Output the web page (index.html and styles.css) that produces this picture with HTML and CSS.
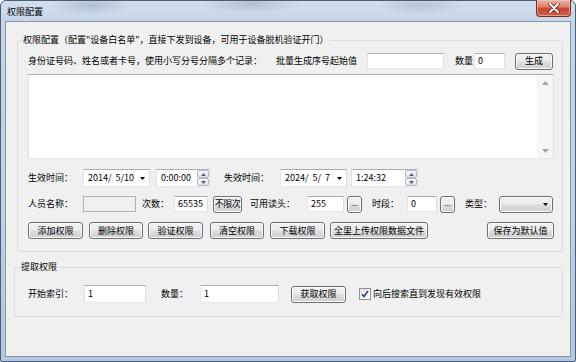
FILE: index.html
```html
<!DOCTYPE html>
<html>
<head>
<meta charset="utf-8">
<link rel="stylesheet" href="styles.css">
</head>
<body>
<div class="window">
  <div class="titlebar">
    <span class="title">权限配置</span>
    <div class="close">
      <svg width="12" height="10" viewBox="0 0 12 10"><path d="M2 1 L10 9 M10 1 L2 9" stroke="#5a1d14" stroke-width="3.4" stroke-linecap="round"/><path d="M2 1 L10 9 M10 1 L2 9" stroke="#fff" stroke-width="2" stroke-linecap="round"/></svg>
    </div>
  </div>
  <div class="client">
    <div class="group g1">
      <span class="legend">权限配置（配置"设备白名单"，直接下发到设备，可用于设备脱机验证开门）</span>
      <div class="row r1">
        <span class="lbl w248">身份证号码、姓名或者卡号，使用小写分号分隔多个记录：</span>
        <span class="lbl w91">批量生成序号起始值</span>
        <div class="tb w77"></div>
        <span class="lbl w19 ml11">数量</span>
        <div class="tb w31">0</div>
        <div class="btn w38 ml10">生成</div>
      </div>
      <div class="memo">
        <div class="vscroll">
          <svg width="7" height="4" viewBox="0 0 7 4"><path d="M0 4 L3.5 0 L7 4 Z" fill="#a6a6a6"/></svg>
          <svg width="7" height="4" viewBox="0 0 7 4"><path d="M0 0 L3.5 4 L7 0 Z" fill="#a6a6a6"/></svg>
        </div>
      </div>
      <div class="row r3">
        <span class="lbl w55">生效时间：</span>
        <div class="dtp w67"><span class="val">2014/&nbsp; 5/10</span><svg class="dd" width="5" height="3" viewBox="0 0 5 3"><path d="M0 0 L5 0 L2.5 3 Z" fill="#000"/></svg></div>
        <div class="dtp time w54 ml6"><span class="val">0:00:00</span>
          <div class="spin"><div class="sb"><svg width="5" height="3" viewBox="0 0 5 3"><path d="M0 3 L2.5 0 L5 3 Z" fill="#4a6484"/></svg></div><div class="sb"><svg width="5" height="3" viewBox="0 0 5 3"><path d="M0 0 L2.5 3 L5 0 Z" fill="#4a6484"/></svg></div></div>
        </div>
        <span class="lbl w56 ml14">失效时间：</span>
        <div class="dtp w67"><span class="val">2024/&nbsp; 5/&nbsp; 7</span><svg class="dd" width="5" height="3" viewBox="0 0 5 3"><path d="M0 0 L5 0 L2.5 3 Z" fill="#000"/></svg></div>
        <div class="dtp time w67 ml4"><span class="val">1:24:32</span>
          <div class="spin"><div class="sb"><svg width="5" height="3" viewBox="0 0 5 3"><path d="M0 3 L2.5 0 L5 3 Z" fill="#4a6484"/></svg></div><div class="sb"><svg width="5" height="3" viewBox="0 0 5 3"><path d="M0 0 L2.5 3 L5 0 Z" fill="#4a6484"/></svg></div></div>
        </div>
      </div>
      <div class="row r4">
        <span class="lbl w55">人员名称：</span>
        <div class="tb dis w53"></div>
        <span class="lbl w32 ml6">次数：</span>
        <div class="tb w34">65535</div>
        <div class="btn w29 ml5 tight">不限次</div>
        <span class="lbl w57 ml8">可用读头：</span>
        <div class="tb w37">255</div>
        <div class="btn dots w15 ml3">...</div>
        <span class="lbl w35 ml10">时段：</span>
        <div class="tb w30">0</div>
        <div class="btn dots w15 ml3">...</div>
        <span class="lbl w34 ml10">类型：</span>
        <div class="combo w54"><svg width="5" height="3" viewBox="0 0 5 3"><path d="M0 0 L5 0 L2.5 3 Z" fill="#000"/></svg></div>
      </div>
      <div class="row r5">
        <div class="btn w55">添加权限</div>
        <div class="btn w54 ml6">删除权限</div>
        <div class="btn w55 ml5">验证权限</div>
        <div class="btn w54 ml7">清空权限</div>
        <div class="btn w55 ml6">下载权限</div>
        <div class="btn w98 ml5">全里上传权限数据文件</div>
        <div class="btn w67 mlauto">保存为默认值</div>
      </div>
    </div>
    <div class="group g2">
      <span class="legend">提取权限</span>
      <div class="row r6">
        <span class="lbl w56">开始索引：</span>
        <div class="tb tall w62">1</div>
        <span class="lbl w39 ml15">数量：</span>
        <div class="tb tall w79">1</div>
        <div class="btn w55 ml12">获取权限</div>
        <div class="chk ml13"><svg width="8" height="8" viewBox="0 0 8 8"><path d="M1 4.2 L3 6.5 L7 1" stroke="#21418a" stroke-width="1.5" fill="none"/></svg></div>
        <span class="lbl ml2">向后搜索直到发现有效权限</span>
      </div>
    </div>
  </div>
</div>
</body>
</html>
```
FILE: styles.css
```css
* { box-sizing: border-box; }
html, body { margin: 0; padding: 0; }
body {
  width: 576px;
  height: 362px;
  overflow: hidden;
  background: #ffffff;
  font-family: "Noto Sans CJK SC", "Noto Sans", sans-serif;
  font-size: 9px;
  line-height: 12px;
  color: #000;
}
.window {
  width: 576px;
  height: 362px;
  border: 1px solid #4a5d76;
  border-radius: 6px 6px 2px 2px;
  padding: 0 4px 4px 4px;
  display: flex;
  flex-direction: column;
  background:
    radial-gradient(ellipse 40px 10px at 90px 4px, rgba(120,140,165,0.35), transparent),
    radial-gradient(ellipse 50px 9px at 250px 3px, rgba(110,130,155,0.3), transparent),
    radial-gradient(ellipse 45px 9px at 420px 4px, rgba(120,140,165,0.3), transparent),
    linear-gradient(to bottom, #d3deea 0px, #c6d6e8 20px, #bcd0e6 60%, #b3c9e1 100%);
}
.titlebar {
  height: 20px;
  display: flex;
  align-items: flex-start;
}
.title {
  margin-top: 5px;
  padding-left: 2px;
  color: #000;
}
.close {
  margin-left: auto;
  margin-top: -1px;
  width: 35px;
  height: 17px;
  border: 1px solid #7a2b20;
  border-top: none;
  border-radius: 0 0 4px 4px;
  background: linear-gradient(to bottom, #eab2a5 0%, #dc8572 40%, #c8452f 55%, #d06248 100%);
  box-shadow: inset 0 0 0 1px rgba(255,210,200,0.5);
  display: flex;
  align-items: center;
  justify-content: center;
}
.client {
  flex: 1;
  background: #f0f0f0;
  border: 1px solid #8396ae;
  display: flex;
  flex-direction: column;
}
.group {
  position: relative;
  border: 1px solid #d5dfe5;
  border-radius: 3px;
  display: flex;
  flex-direction: column;
}
.legend {
  position: absolute;
  top: -7px;
  left: 4px;
  padding: 0 1px;
  background: #f0f0f0;
  line-height: 12px;
  white-space: nowrap;
}
.g1 {
  margin: 18px 7px 0 11px;
  padding: 12px 8px 12px 10px;
}
.g2 {
  margin: 15px 7px 0 8px;
  padding: 17px 8px 13px 13px;
}
.g2 .legend { left: 5px; }
.row {
  display: flex;
  align-items: center;
  flex-shrink: 0;
}
.r1 { height: 16px; }
.r3 { height: 18px; margin-top: 10px; }
.r4 { height: 18px; margin-top: 8px; }
.r5 { height: 17px; margin-top: 9px; }
.r6 { height: 18px; }
.lbl { white-space: nowrap; flex-shrink: 0; }
.tb {
  flex-shrink: 0;
  height: 16px;
  background: #fff;
  border: 1px solid;
  border-color: #abadb3 #dbdfe6 #e3e9ef #e2e3ea;
  padding-left: 3px;
  line-height: 14px;
  white-space: nowrap;
  overflow: hidden;
}
.tb.tall { height: 18px; line-height: 16px; }
.tb.dis { background: #f0f0f0; border-color: #adb2b5; }
.memo {
  margin-top: 5px;
  height: 85px;
  background: #fff;
  border: 1px solid;
  border-color: #abadb3 #dbdfe6 #e3e9ef #e2e3ea;
  display: flex;
  justify-content: flex-end;
}
.vscroll {
  width: 16px;
  background: #f6f6f6;
  display: flex;
  flex-direction: column;
  justify-content: space-between;
  align-items: center;
  padding: 6px 0 5px;
}
.dtp {
  flex-shrink: 0;
  height: 18px;
  background: #fff;
  border: 1px solid;
  border-color: #abadb3 #dbdfe6 #e3e9ef #e2e3ea;
  display: flex;
  align-items: center;
  padding-left: 4px;
}
.dtp .val { white-space: pre; }
.dtp .dd { margin-left: auto; margin-right: 4px; }
.spin {
  margin-left: auto;
  width: 12px;
  height: 16px;
  display: flex;
  flex-direction: column;
}
.sb {
  flex: 1;
  border: 1px solid #b5bac2;
  border-radius: 2px;
  background: linear-gradient(to bottom, #f7f7f7, #e1e3e6);
  display: flex;
  align-items: center;
  justify-content: center;
}
.btn {
  flex-shrink: 0;
  height: 17px;
  border: 1px solid #707070;
  border-radius: 3px;
  background: linear-gradient(to bottom, #f2f2f2 0%, #ebebeb 48%, #dddddd 52%, #cfcfcf 100%);
  box-shadow: inset 0 0 0 1px #fbfbfb;
  display: flex;
  align-items: center;
  justify-content: center;
  white-space: nowrap;
  line-height: 12px;
}
.r4 .btn { height: 17px; }
.btn.tight { letter-spacing: -0.5px; }
.btn.dots { font-size: 8px; color: #333; padding-bottom: 2px; }
.combo {
  flex-shrink: 0;
  height: 17px;
  border: 1px solid #707070;
  border-radius: 3px;
  background: linear-gradient(to bottom, #f2f2f2 0%, #ebebeb 48%, #dddddd 52%, #cfcfcf 100%);
  box-shadow: inset 0 0 0 1px #fbfbfb;
  display: flex;
  align-items: center;
  justify-content: flex-end;
  padding-right: 4px;
}
.chk {
  flex-shrink: 0;
  width: 12px;
  height: 12px;
  border: 1px solid #8e8f8f;
  background: linear-gradient(135deg, #e6e6e6, #ffffff);
  display: flex;
  align-items: center;
  justify-content: center;
}
.w15 { width: 15px; } .w19 { width: 19px; } .w29 { width: 29px; } .w30 { width: 30px; }
.w31 { width: 31px; } .w32 { width: 32px; } .w34 { width: 34px; } .w35 { width: 35px; }
.w37 { width: 37px; } .w38 { width: 38px; } .w39 { width: 39px; } .w53 { width: 53px; }
.w54 { width: 54px; } .w55 { width: 55px; } .w56 { width: 56px; } .w57 { width: 57px; }
.w62 { width: 62px; } .w67 { width: 67px; } .w77 { width: 77px; } .w79 { width: 79px; }
.w91 { width: 91px; } .w98 { width: 98px; } .w248 { width: 248px; }
.ml2 { margin-left: 2px; } .ml3 { margin-left: 3px; } .ml4 { margin-left: 4px; }
.ml5 { margin-left: 5px; } .ml6 { margin-left: 6px; } .ml7 { margin-left: 7px; }
.ml8 { margin-left: 8px; } .ml10 { margin-left: 10px; } .ml11 { margin-left: 11px; }
.ml12 { margin-left: 12px; } .ml13 { margin-left: 13px; } .ml14 { margin-left: 14px; }
.ml15 { margin-left: 15px; } .mlauto { margin-left: auto; }
```
